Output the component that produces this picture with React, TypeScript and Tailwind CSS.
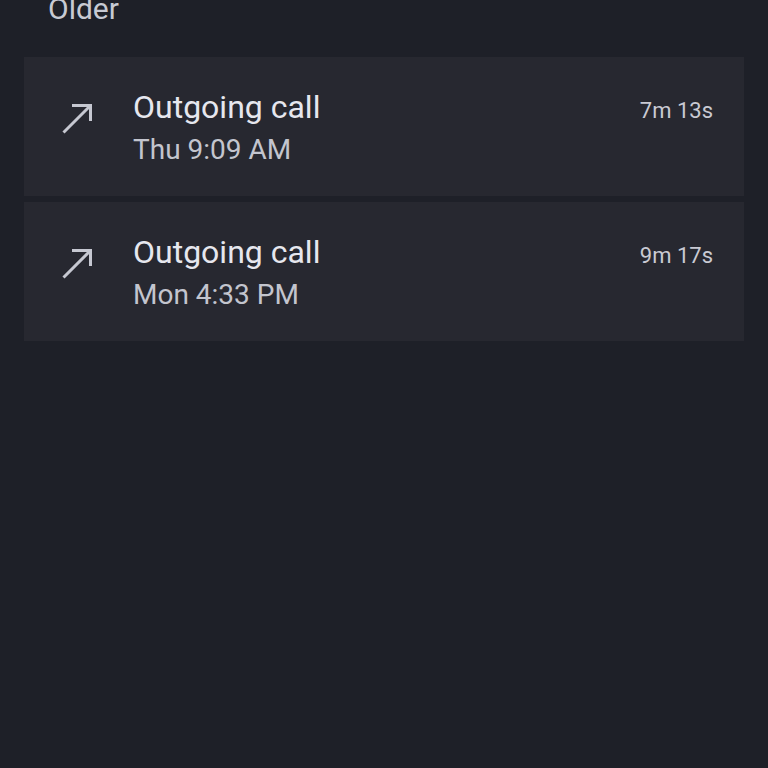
import React from "react";

interface CallRowProps {
  title: string;
  when: string;
  duration: string;
}

function OutgoingIcon() {
  return (
    <svg width="32" height="32" viewBox="0 0 32 32" fill="none">
      <path
        d="M11 2.5H29.5V18 M29.5 2.5L2.5 29.5"
        stroke="#c6c8d1"
        strokeWidth="3"
      />
    </svg>
  );
}

function CallRow({ title, when, duration }: CallRowProps) {
  return (
    <div className="h-[139px] bg-[#272830] flex">
      {/* Direction icon */}
      <div className="w-[109px] shrink-0 pl-[37px] pt-[46px]">
        <OutgoingIcon />
      </div>

      {/* Call info */}
      <div className="flex-1 pt-[32px] pr-[31px]">
        <div className="flex items-baseline justify-between">
          <span className="text-[32px] leading-[36px] text-[#e6e7ee]">{title}</span>
          <span className="text-[22px] leading-[28px] text-[#c9cad3]">{duration}</span>
        </div>
        <div className="mt-2 text-[28px] leading-[34px] text-[#c3c5ce]">{when}</div>
      </div>
    </div>
  );
}

export default function App() {
  return (
    <div
      className="h-[768px] w-full overflow-hidden bg-[#1e2028]"
      style={{ fontFamily: "Roboto, 'Noto Sans', sans-serif" }}
    >
      {/* Section header */}
      <div className="h-[57px] pl-[48px] flex flex-col">
        <div className="-mt-[5px] text-[30px] leading-[28px] text-[#c8cad3]">Older</div>
      </div>

      {/* Call list */}
      <div className="mx-[24px] flex flex-col gap-[6px]">
        <CallRow title="Outgoing call" when="Thu 9:09 AM" duration="7m 13s" />
        <CallRow title="Outgoing call" when="Mon 4:33 PM" duration="9m 17s" />
      </div>
    </div>
  );
}
